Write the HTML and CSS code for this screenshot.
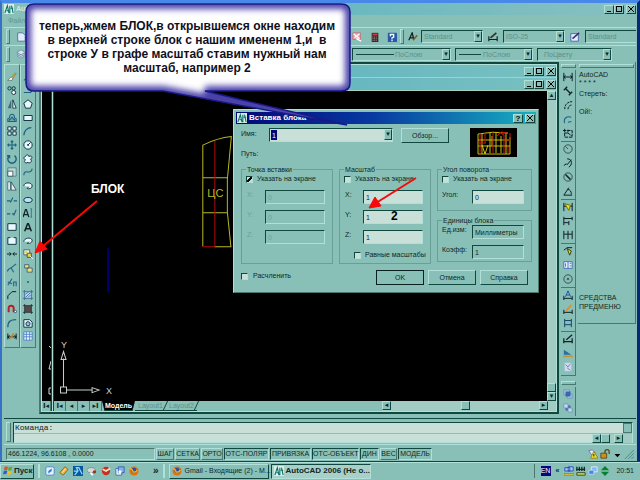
FILE: index.html
```html
<!DOCTYPE html>
<html lang="ru">
<head>
<meta charset="utf-8">
<title>AutoCAD 2006</title>
<link rel="stylesheet" href="styles.css">
</head>
<body>
<div class="desktop">
<main class="app">
  <header class="titlebar">
    <svg class="logo" viewBox="0 0 12 12"><rect width="12" height="12" fill="#d8f0e8"/><path d="M1 11L4 2l2 9M3 8h3M7 2v9M9 2l2 9M8 5h3" stroke="#087068" fill="none" stroke-width="1.3"/></svg>
    <span class="app-name">AutoCAD</span>
    <span class="win-buttons"><button aria-label="Свернуть" class="min"></button><button aria-label="Развернуть" class="max"></button><button aria-label="Закрыть" class="close"></button></span>
  </header>
  <nav class="menu"><a href="#">Файл</a></nav>
  <div class="toolbar standard">
    <div class="tools-left"><i class="grip"></i>
      <svg class="ic" viewBox="0 0 12 12"><path d="M2 1h6l3 3v7H2z" fill="#e0ecf8" stroke="#486898"/></svg></div>
    <svg class="ic" viewBox="0 0 12 12"><path d="M1 1h9v8H1z" fill="#f0a0a8" stroke="#c86878"/><path d="M2 2l7 6M9 2L3 7M5 8l6 3" stroke="#fff" stroke-width="1.5"/></svg>
    <svg class="ic" viewBox="0 0 12 12"><path d="M2 1h8v11H2z" fill="#402828"/><path d="M3 2h6v2H3z" fill="#d04040"/><path d="M3 6h6M3 8h6M3 10h6" stroke="#c0a0a0" stroke-dasharray="1 1"/></svg>
    <svg class="ic help" viewBox="0 0 12 12"><rect x="1" y="1" width="11" height="11" rx="1" fill="#2858a8"/><path d="M4 5V3h4v3L6 7v1M6 9v2" fill="none" stroke="#fff" stroke-width="1.6"/></svg>
    <i class="grip"></i>
    <svg class="ic" viewBox="0 0 12 12"><path d="M1 10L5 1l2 8M2 7h5" fill="none" stroke="#102020" stroke-width="1.5"/><path d="M6 10l5-6" stroke="#806020" stroke-width="2"/></svg>
    <span class="combo"><select aria-label="Текстовый стиль" disabled><option>Standard</option></select></span>
    <svg class="ic" viewBox="0 0 12 12"><path d="M1 5v6M11 5v6M1 9h10" stroke="#102020" stroke-width="1.4"/><path d="M3 7l7-6" stroke="#303020" stroke-width="2"/></svg>
    <span class="combo"><select aria-label="Размерный стиль" disabled><option>ISO-25</option></select></span>
    <svg class="ic" viewBox="0 0 12 12"><path d="M1 2h9v9H1z" fill="#e8f0ff" stroke="#3858b0"/><path d="M3 8l8-7" stroke="#403070" stroke-width="2"/></svg>
    <span class="combo last"><select aria-label="Стиль таблиц" disabled><option>Standard</option></select></span>
  </div>
  <div class="toolbar properties">
    <div class="tools-left"><i class="grip"></i>
      <svg class="ic" viewBox="0 0 12 12"><path d="M1 4l5-3 5 3-5 3zM1 6l5 3 5-3M1 8l5 3 5-3" fill="#d8e8f0" stroke="#6888a0"/></svg></div>
    <span class="combo lined long"><select aria-label="Тип линии" disabled><option>ПоСлою</option></select></span>
    <span class="combo lined"><select aria-label="Вес линии" disabled><option>ПоСлою</option></select></span>
    <span class="combo"><select aria-label="Стиль печати" disabled><option>ПоЦвету</option></select></span>
  </div>

  <div class="workspace">
    <aside class="palette">
      <div class="tool-col">
        <svg viewBox="0 0 12 12"><path d="M4 8l6-7 1 1-5 7z" fill="#e8b840" stroke="#705020" stroke-width=".6"/><path d="M1 10h5l1-2-2-2z" fill="#fff" stroke="#404040" stroke-width=".6"/></svg>
        <svg viewBox="0 0 12 12" class="ln"><circle cx="3" cy="4" r="2"/><circle cx="8" cy="4" r="2"/><circle cx="8" cy="9" r="2.4" fill="#fff"/></svg>
        <svg viewBox="0 0 12 12"><path d="M5 1v10H1z" fill="#406878"/><path d="M7 1v10h4z" fill="#e8f8ff" stroke="#102838"/></svg>
        <svg viewBox="0 0 12 12" class="bl"><path d="M1 10V7l2-1c0-6 6-6 6 0l2 1v3zM3 9V8l2-1c0-3 2-3 2 0l2 1v1"/></svg>
        <svg viewBox="0 0 12 12" class="ln"><path fill="#e8f8ff" d="M1 1h4v4H1zM7 1h4v4H7zM1 7h4v4H1zM7 7h4v4H7z"/></svg>
        <svg viewBox="0 0 12 12" class="bl"><path d="M6 1v10M1 6h10M4.500 2.500L6 1l1.500 1.500M4.500 9.500L6 11l1.500-1.500M2.500 4.500L1 6l1.500 1.500M9.500 4.500L11 6 9.500 7.500"/></svg>
        <svg viewBox="0 0 12 12" class="bl"><path stroke-width="1.7" d="M3 2a5 5 0 1 0 6 0M3 5V2h-3"/></svg>
        <svg viewBox="0 0 12 12"><path fill="#b8d8d8" stroke="#507880" d="M1 1h10v10H1z"/><path fill="#fff" stroke="#305060" d="M1 5h6v6H1z"/></svg>
        <svg viewBox="0 0 12 12"><path d="M1 1h3v10H1z" fill="#fff" stroke="#406070"/><path d="M5 1l6 10H5z" fill="#e8f0f0" stroke="#305060"/></svg>
        <svg viewBox="0 0 12 12" class="bl"><path d="M0 7h4M8 7h4M4 9l3-6"/></svg>
        <svg viewBox="0 0 12 12" class="bl"><path d="M0 7h4M6 7h3M8 9l3-7"/></svg>
        <svg viewBox="0 0 12 12" class="ln"><path fill="#e8f8ff" d="M1 2h10v8H1z"/></svg>
        <svg viewBox="0 0 12 12" class="ln"><path fill="#e8f8ff" d="M4 2H1v8h10V2H8"/></svg>
        <svg viewBox="0 0 12 12" class="dk"><path d="M0 6h5M7 6h5M3 4l2 2-2 2M9 4L7 6l2 2"/></svg>
        <svg viewBox="0 0 12 12" class="bl"><path d="M1 8l5-3 5-4M5 6l3 5M0 10l2-2"/></svg>
        <svg viewBox="0 0 12 12" class="bl"><path d="M1 10l5-8M1 6l5 2M8 11V6h3v5"/></svg>
        <svg viewBox="0 0 12 12" class="dk"><path d="M1 11V7l5-5h5"/></svg>
        <svg viewBox="0 0 12 12"><path d="M2 10V5c0-4 6-4 6 0v5" fill="none" stroke="#b82028" stroke-width="2.400"/><circle cx="10" cy="9" r="1.400" fill="#fff" stroke="#304060"/></svg>
        <svg viewBox="0 0 12 12" class="bl"><path d="M1 11C1 4 4 2 11 2" stroke-width="1.500"/></svg>
        <svg viewBox="0 0 12 12" class="dk"><path d="M1 3v7M11 3v7M1 7h10M3 5L1 7l2 2M9 5l2 2-2 2"/><path d="M4 9l4-6" stroke="#d08020" stroke-width="2"/></svg>
      </div>
      <div class="tool-col">
        <svg viewBox="0 0 12 12" class="bl"><path d="M1 10L11 2"/></svg>
        <svg viewBox="0 0 12 12" class="bl"><path d="M1 9h7c3 0 3-5 0-5"/></svg>
        <svg viewBox="0 0 12 12" class="ln"><path fill="#e8f8ff" d="M6 1l5 4-2 6H3L1 5z"/></svg>
        <svg viewBox="0 0 12 12" class="ln"><path fill="#e8f8ff" d="M1 3h10v6H1z"/></svg>
        <svg viewBox="0 0 12 12" class="bl"><path d="M1 11C1 6 5 2 10 2" stroke-width="1.500"/></svg>
        <svg viewBox="0 0 12 12" class="ln"><circle cx="6" cy="6" r="5" fill="#e8f8ff"/><path d="M6 6l3-3"/><circle cx="6" cy="6" r=".7"/></svg>
        <svg viewBox="0 0 12 12" class="ln"><path fill="#e8f8ff" d="M3 3c1-3 4-2 4 0 4-2 5 2 2 3 3 3-1 6-3 4-3 2-6-1-3-3-3-1-2-4 0-4z"/></svg>
        <svg viewBox="0 0 12 12" class="bl"><path d="M1 10c0-6 4-4 5-4s4 1 5-4"/></svg>
        <svg viewBox="0 0 12 12" class="ln"><path fill="#e8f8ff" d="M1 6c0-5 10-5 10 0 0 3-4 4-6 3L7 7"/></svg>
        <svg viewBox="0 0 12 12" class="ln"><ellipse cx="6" cy="6" rx="5" ry="3" fill="#b8e8f8"/></svg>
        <svg viewBox="0 0 12 12" class="dk"><path d="M0 11L3 2h1l3 9M1 8h5" stroke-width="1.500"/><path d="M10 1v10M9 1h2M9 11h2" stroke="#3878a0"/></svg>
        <svg viewBox="0 0 12 12" class="dk"><path d="M2 11L5.500 2h1L10 11M3.500 8h5" stroke-width="1.800"/></svg>
        <svg viewBox="0 0 12 12" class="ln"><path fill="#e8f8ff" d="M1 7c0-5 9-6 10-2 0 4-4 4-6 4L7 7"/></svg>
        <svg viewBox="0 0 12 12"><path fill="#f8f8e0" stroke="#405868" d="M1 1h7v6H1z"/><path fill="#e8d048" stroke="#504820" d="M5 5h5v5H5z"/><circle cx="4" cy="4" r="1.500" fill="#e8d048"/><path d="M8 8l4 4" stroke="#fff"/></svg>
        <svg viewBox="0 0 12 12"><path fill="#f0e080" stroke="#405868" d="M2 2h5v4H2zM5 6h6v5H5z"/></svg>
        <svg viewBox="0 0 12 12"><rect x="5" y="5" width="2" height="2" fill="#185878"/></svg>
        <svg viewBox="0 0 12 12"><path d="M2 2h8v8H2z" fill="#b8d8f0"/><path d="M0 2h12M0 10h12M2 0v12M10 0v12M3 5l4-3M3 9l6-6M6 9l3-3" stroke="#386898"/></svg>
        <svg viewBox="0 0 12 12"><path d="M2 2h8v8H2z" fill="#584848"/><path d="M0 2h12M0 10h12M2 0v12M10 0v12" stroke="#203038"/></svg>
        <svg viewBox="0 0 12 12" class="ln"><path fill="#e8f8ff" d="M1 2h7l3 3v6H1z"/><circle cx="6" cy="7" r="2.500" fill="#90c8e0"/></svg>
        <svg viewBox="0 0 12 12"><path fill="#e8f8ff" stroke="#4878c8" d="M1 1h10v10H1zM1 4h10M1 7h10M4 1v10M8 1v10"/></svg>
      </div>
    </aside>

    <section class="documents">
      <div class="doc-title"><span class="win-buttons"><button aria-label="Свернуть" class="min"></button><button aria-label="Развернуть" class="max"></button><button aria-label="Закрыть" class="close"></button></span></div>
      <div class="doc-row">
        <div class="doc-back"><div class="back-canvas"><svg viewBox="0 0 9 60"><path d="M9 7L7 5M7 28l2-8M7 28h2M9 47H7v6h2" fill="none" stroke="#d0d8d8"/></svg></div><button class="nav-btn" aria-label="Первый лист">I◂</button></div>
        <div class="doc-front">
          <div class="doc-title"><span class="win-buttons"><button aria-label="Свернуть" class="min"></button><button aria-label="Развернуть" class="max"></button><button aria-label="Закрыть" class="close"></button></span></div>
          <div class="view">
            <div class="canvas">
              <svg viewBox="55 92 492 308" preserveAspectRatio="xMinYMin meet">
                <g fill="none" stroke="#b8b820"><path d="M203.500 247V146Q218 139 232 137.500L228 180v33l3.500 34M203 178.500h25M203 213.500h25M215 247.500h17"/></g>
                <path d="M215.500 142v105.500H203" stroke="#b00808" fill="none"/>
                <text x="208" y="198" class="block-label">ЦС</text>
                <path d="M109 249v44" stroke="#000080" stroke-width="1.500"/>
                <g fill="none" stroke="#c8d0d0"><path d="M61.500 387.500h6v6h-6zM64.500 387v-28M62 360l2.500-8 2.500 8zM67 390.500h26M93 388l7 2.500-7 2.500z"/></g>
                <text x="107" y="394" class="axis">X</text><text x="62" y="348" class="axis">Y</text>
              </svg>
            </div>
            <div class="vscroll"><button aria-label="Вверх">▴</button><i class="thumb"></i><button aria-label="Вниз">▾</button></div>
          </div>
          <div class="sheetbar">
            <button class="nav-btn" aria-label="Первый">I◂</button><button class="nav-btn" aria-label="Назад">◂</button><button class="nav-btn" aria-label="Вперёд">▸</button><button class="nav-btn" aria-label="Последний">▸I</button>
            <button class="tab active">Модель</button><button class="tab">Layout1</button><button class="tab">Layout2</button>
            <div class="hscroll"><button aria-label="Влево">◂</button><i class="thumb"></i><button aria-label="Вправо">▸</button></div>
          </div>
        </div>
      </div>
    </section>

    <aside class="dims">
      <i class="hgrip"></i>
      <div class="dim-set">
        <svg viewBox="0 0 12 12" class="dk"><path d="M1 1v10M11 1v10M1 6h10M3 4L1 6l2 2M9 4l2 2-2 2"/></svg>
        <svg viewBox="0 0 12 12" class="dk"><path d="M1 5l4-4M7 11l4-4M3 3l6 6" stroke-width="1.600"/></svg>
        <svg viewBox="0 0 12 12" class="dk"><path d="M2 11C2 6 5 2 11 2M6 11c0-3 2-5 5-5" stroke-dasharray="3 1"/></svg>
        <svg viewBox="0 0 12 12" class="bl"><path d="M2 11C0 5 5 2 10 4M6 10l4-1"/></svg>
        <svg viewBox="0 0 12 12" class="dk"><path d="M2 1v10h9M2 6h4V2M6 6l5 4V3M0 3h11" stroke-dasharray="4 1"/></svg>
      </div>
      <div class="dim-set">
        <svg viewBox="0 0 12 12" class="dk thin"><circle cx="6" cy="6" r="5"/><path d="M6 6L3 3"/></svg>
        <svg viewBox="0 0 12 12" class="dk"><path d="M5 1c7 0 6 8 2 10M1 9l3-2 1 1 5-6"/></svg>
        <svg viewBox="0 0 12 12" class="dk thin"><circle cx="6" cy="6" r="5"/><path d="M3 3l6 6" stroke-width="1.800"/></svg>
        <svg viewBox="0 0 12 12" class="dk"><path d="M11 11H1l6-9M5 4c4 0 5 3 5 6"/></svg>
      </div>
      <div class="dim-set">
        <svg viewBox="0 0 12 12" class="dk"><path d="M1 1v10M11 1v10M1 5h10"/><path d="M2 2l7 2-2 6z" fill="#f0e020" stroke="#707010"/></svg>
        <svg viewBox="0 0 12 12" class="dk"><path d="M1 1v10M11 1v4M7 6v5M1 3h10M1 8h6"/></svg>
        <svg viewBox="0 0 12 12" class="dk"><path d="M1 1v10M6 1v10M11 1v10M1 5h10"/></svg>
      </div>
      <div class="dim-set">
        <svg viewBox="0 0 12 12" class="dk"><path d="M1 5l4-3h6"/><path d="M5 3l5 3-2 5z" fill="#f0e020" stroke="#404010"/></svg>
        <svg viewBox="0 0 12 12"><path d="M1 2h10v8H1zM6 2v8" fill="#e8f0ff" stroke="#3868b0"/><path d="M3 4v4M8 4h2M8 7h2" stroke="#3868b0"/></svg>
        <svg viewBox="0 0 12 12" class="dk thin"><circle cx="6" cy="6" r="5"/><circle cx="6" cy="6" r="1"/></svg>
      </div>
      <div class="dim-set">
        <svg viewBox="0 0 12 12" class="dk"><path d="M1 7v5M11 7v5M1 10h10"/><path d="M3 8l3-7 3 7M4 6h4" stroke="#2058a0"/></svg>
        <svg viewBox="0 0 12 12" class="dk"><path d="M1 7v5M11 7v5M1 10h10"/><path d="M4 8l6-7" stroke="#e09020" stroke-width="2"/></svg>
        <svg viewBox="0 0 12 12" class="dk"><path d="M2 1v10M10 1v10M2 3h8M2 8h8" stroke="#184868"/></svg>
      </div>
      <div class="dim-set">
        <svg viewBox="0 0 12 12" class="dk"><path d="M1 5v6M11 5v6M1 9h10M4 7l7-6" stroke-width="1.500"/></svg>
        <svg viewBox="0 0 12 12"><path d="M1 8V2l9 6z" fill="#2870a8"/><path d="M0 9h12v2H0z" fill="#c09838"/></svg>
        <svg viewBox="0 0 12 12"><path d="M2 1h8v10H2z" fill="#d0d8f0"/><path d="M3 3l3 3 3-4M5 7l4 3" stroke="#6878a8" fill="none"/></svg>
      </div>
      <i class="hgrip order-grip"></i>
      <div class="dim-set open">
        <svg viewBox="0 0 12 12"><path d="M1 1h7v6H1zM5 6h6v5H5z" fill="#a8c8e8" stroke="#7090b8"/><path d="M3 3h6v6H3z" fill="#3868a8"/></svg>
        <svg viewBox="0 0 12 12"><path d="M3 3h6v6H3z" fill="#3868a8"/><path d="M1 1h5v5H1zM6 6h5v5H6z" fill="#c0d8f0" stroke="#7090b8"/></svg>
      </div>
    </aside>
    <aside class="screen-menu">
      <i class="hgrip"></i>
      <a href="#">AutoCAD</a><a href="#" class="stars">* * * *</a><a href="#" class="erase">Стереть:</a><a href="#">Ой!:</a>
      <div class="menu-end"><a href="#">СРЕДСТВА</a><a href="#">ПРЕДМЕНЮ</a></div>
    </aside>
  </div>

  <section class="command">
    <i class="grip"></i>
    <div class="command-box">
      <div class="history"><label for="cmd">Команда:</label><i class="spin"></i></div>
      <div class="prompt"><input id="cmd" type="text"><div class="hscroll"><button aria-label="Влево">◂</button><i class="thumb"></i><button aria-label="Вправо">▸</button></div></div>
    </div>
  </section>
  <footer class="status">
    <output class="coords">466.1224, 96.6108 , 0.0000</output>
    <button>ШАГ</button><button>СЕТКА</button><button>ОРТО</button><button class="on">ОТС-ПОЛЯР</button><button class="on">ПРИВЯЗКА</button><button class="on">ОТС-ОБЪЕКТ</button><button class="on">ДИН</button><button>ВЕС</button><button class="on">МОДЕЛЬ</button>
    <span class="status-icons">
      <svg viewBox="0 0 12 12"><path d="M1 2l4-1 4 4-4 3z" fill="#e8e8f8" stroke="#7070a0"/><path d="M7 3l5 8H3z" fill="#f8e020" stroke="#907810"/><path d="M7 6v3" stroke="#000"/></svg>
      <svg viewBox="0 0 12 12"><path d="M1 5h7v6H1z" fill="#c89020" stroke="#604008"/><path d="M6 5V3c0-3 5-3 5 0v3" fill="none" stroke="#604008" stroke-width="1.500"/></svg>
      <svg viewBox="0 0 12 12"><path d="M3 6h7l-3.500 4z" fill="#000"/></svg>
      <svg viewBox="0 0 12 12"><path d="M1 12L12 1M5 12l7-7M9 12l3-3" stroke="#488078"/></svg>
    </span>
  </footer>
</main>

<footer class="taskbar">
  <button class="start"><svg viewBox="0 0 12 12"><path d="M2 1q2-1 4 0L5 5Q3 4 1 5z" fill="#e85020"/><path d="M7 1q2 1 4 0l-1 4Q8 6 6 5z" fill="#60a828"/><path d="M1 6q2-1 4 0l-1 4Q2 9 0 10z" fill="#2860d0"/><path d="M6 6q2 1 4 0l-1 4q-2 1-4 0z" fill="#f0c018"/></svg>Пуск</button>
  <i class="bar-sep"></i>
  <nav class="quick">
    <svg viewBox="0 0 12 12"><rect x="1" y="1" width="10" height="10" rx="2" fill="#e0f0ff" stroke="#4080c0"/><path d="M8 3L4 6v3l4-3z" fill="#3878c0"/></svg>
    <svg viewBox="0 0 12 12"><path d="M1 8l6-7 4 3-6 7z" fill="#f0b030" stroke="#886020"/><path d="M4 8l4-5" stroke="#fff"/></svg>
    <svg viewBox="0 0 12 12"><rect width="12" height="12" fill="#0858a0"/><path d="M2 11L6 6 4 2h3l4 8M1 6h4" stroke="#90d8f8" fill="none" stroke-width="1.500"/></svg>
    <svg viewBox="0 0 12 12"><ellipse cx="5" cy="5" rx="5" ry="3" fill="#d8d8d8" stroke="#788"/><circle cx="9" cy="7" r="2" fill="#a03028"/><path d="M4 8l3 3" stroke="#fff" stroke-width="2"/></svg>
    <svg viewBox="0 0 12 12"><circle cx="6" cy="6" r="5" fill="#c83020"/><path d="M2 4l4 2 5-3" stroke="#f8e0d0" stroke-width="2" fill="none"/></svg>
    <svg viewBox="0 0 12 12"><path d="M1 3h7v8H1z" fill="#e8f0ff" stroke="#3868b8"/><path d="M4 1h7v7H4z" fill="#80b0f0" stroke="#3058a8"/><circle cx="6" cy="7" r="2" fill="#fff"/></svg>
    <svg viewBox="0 0 12 12"><circle cx="6" cy="6" r="5.500" fill="#e07010"/><circle cx="6" cy="5" r="3" fill="#2850a0"/><path d="M1 3q3 0 4 4 3 1 5-2" stroke="#f8b828" stroke-width="1.500" fill="none"/></svg>
  </nav>
  <span class="more">»</span>
  <i class="bar-sep"></i>
  <button class="task"><svg viewBox="0 0 12 12"><circle cx="6" cy="6" r="5.500" fill="#e07010"/><circle cx="6" cy="5" r="3" fill="#2850a0"/><path d="M1 3q3 0 4 4 3 1 5-2" stroke="#f8b828" stroke-width="1.500" fill="none"/></svg>Gmail - Входящие (2) - M...</button>
  <button class="task current"><svg viewBox="0 0 12 12"><rect width="12" height="12" fill="#d8f0e8"/><path d="M1 11L4 2l2 9M3 8h3M7 2v9M9 2l2 9M8 5h3" stroke="#087068" fill="none" stroke-width="1.300"/></svg>AutoCAD 2006 (Не о...</button>
  <div class="tray">
    <span class="lang">EN</span><span class="less">«</span>
    <svg viewBox="0 0 12 12"><path d="M1 2h6v4H1zM5 1h6v5H5z" fill="#b0d0f8" stroke="#1840b0"/><path d="M0 9h12v2H0z" fill="#e0d050" stroke="#405020" stroke-width=".5"/></svg>
    <svg viewBox="0 0 12 12"><path d="M1 1v5M4 1v5M7 1v5M10 1v5M1 4h10" stroke="#102820" stroke-width="1.500"/><path d="M1 8h10v3H1z" fill="#d8d850" stroke="#203820"/></svg>
    <svg viewBox="0 0 12 12"><path d="M4 1h7v6H4z" fill="#80b8f8" stroke="#e0f0ff"/><path d="M1 5h6v5H1z" fill="#4888e0" stroke="#c0d8f8"/></svg>
    <svg viewBox="0 0 12 12"><path d="M1 5l5-5 5 5zM1 7l5 5 5-5z" fill="#088030"/></svg>
    <time>20:51</time>
  </div>
</footer>

<form class="dialog" onsubmit="return false">
  <div class="dialog-title"><svg viewBox="0 0 12 12"><rect width="12" height="12" fill="#d8f0e8"/><path d="M1 11L4 2l2 9M3 8h3M7 2v9M9 2l2 9M8 5h3" stroke="#087068" fill="none" stroke-width="1.300"/></svg><span>Вставка блока</span><span class="win-buttons"><button type="button" aria-label="Справка" class="what">?</button><button type="button" aria-label="Закрыть" class="close"></button></span></div>
  <div class="dialog-body">
    <div class="name-row">
      <div class="name-col"><label for="bname">Имя:</label><span class="combo name"><select id="bname"><option>1</option></select></span><button type="button" class="btn">Обзор...</button><span class="path">Путь:</span></div>
      <svg class="preview" viewBox="0 0 47 29"><rect width="47" height="29"/><path d="M8 6Q22 3 38 5M8 12h31M8 18h32M8 26h32M8 6v20M12 6v20M20 5v20M26 5v20M31 8v17M36 5v21M40 9v17M12 17l3 9 3-9M22 8v10" stroke="#c8c010" fill="none"/><path d="M10 5v21M15 5v10M23 5v21M29 4l5 3v5h6V5M34 12v14M8 15h8M38 18v8M27 8l4-4 6 1" stroke="#c81808" fill="none"/></svg>
    </div>
    <div class="groups">
      <fieldset class="insertion"><legend>Точка вставки</legend>
        <label class="check"><input type="checkbox" checked>Указать на экране</label>
        <label class="field off"><span>X:</span><input type="text" value="0" disabled></label>
        <label class="field off"><span>Y:</span><input type="text" value="0" disabled></label>
        <label class="field off"><span>Z:</span><input type="text" value="0" disabled></label>
      </fieldset>
      <fieldset class="scale"><legend>Масштаб</legend>
        <label class="check"><input type="checkbox">Указать на экране</label>
        <label class="field"><span>X:</span><input type="text" value="1"></label>
        <label class="field"><span>Y:</span><input type="text" value="1"></label>
        <label class="field"><span>Z:</span><input type="text" value="1"></label>
        <label class="check uniform"><input type="checkbox">Равные масштабы</label>
      </fieldset>
      <div class="right-groups">
        <fieldset><legend>Угол поворота</legend>
          <label class="check"><input type="checkbox">Указать на экране</label>
          <label class="field"><span>Угол:</span><input type="text" value="0"></label>
        </fieldset>
        <fieldset class="units"><legend>Единицы блока</legend>
          <label class="field"><span>Ед.изм:</span><input type="text" value="Миллиметры" readonly></label>
          <label class="field"><span>Коэфф:</span><input type="text" value="1" readonly></label>
        </fieldset>
      </div>
    </div>
    <div class="dialog-foot"><label class="check"><input type="checkbox">Расчленить</label><button class="btn default">OK</button><button type="button" class="btn">Отмена</button><button type="button" class="btn">Справка</button></div>
  </div>
</form>

<svg class="callout-shape" viewBox="0 0 352 132" aria-hidden="true">
  <defs>
    <filter id="soft" x="-10%" y="-10%" width="120%" height="120%"><feGaussianBlur stdDeviation="3"/></filter>
    <clipPath id="bubble"><path d="M34 4H341Q350 4 350 12V83Q350 91 341 91H205L347 125 163 91H34Q26 91 26 83V12Q26 4 34 4Z"/></clipPath>
  </defs>
  <g clip-path="url(#bubble)"><path d="M0 0H352V132H0Z" fill="#fff"/>
    <path d="M34 4H341Q350 4 350 12V83Q350 91 341 91H205L347 125 163 91H34Q26 91 26 83V12Q26 4 34 4Z" fill="none" stroke="#4840a8" stroke-width="10" filter="url(#soft)"/></g>
  <path d="M34 4H341Q350 4 350 12V83Q350 91 341 91H205L347 125 163 91H34Q26 91 26 83V12Q26 4 34 4Z" fill="none" stroke="#181888" stroke-width="1.500"/>
</svg>
<p class="callout-text">теперь,жмем БЛОК,в открывшемся окне находим<br>в верхней строке блок с нашим имененм 1,и &nbsp;в<br>строке У в графе масштаб ставим нужный нам<br>масштаб, например 2</p>
<strong class="note block-note">БЛОК</strong>
<strong class="note scale-note">2</strong>
<svg class="arrows" viewBox="0 0 640 480" aria-hidden="true"><g stroke="#f80808" stroke-width="2" fill="#f80808"><path d="M97 201L42 247"/><path d="M35 253l5-12 7 8z" stroke-width="1"/><path d="M416 178l-40 25"/><path d="M369 208l6-11 6 9z" stroke-width="1"/></g></svg>
</div>
</body>
</html>
```
FILE: styles.css
```css
:root {
  --face: #88c0b8;
  --light: #b0e0d8;
  --dark: #487870;
  --edge: #104840;
  --field: #c8e0d8;
  --ink: #102824;
}
*, *::before, *::after { box-sizing: border-box; }
body {
  margin: 0;
  font: 7px/10px "Liberation Sans", sans-serif;
  color: var(--ink);
  background: var(--face);
}
button, input, select { font: inherit; color: inherit; margin: 0; padding: 0; border: 0; border-radius: 0; background: none; min-width: 0; }
a { color: inherit; text-decoration: none; }
i { display: block; }
svg { display: block; }
.dk, .ln, .bl { fill: none; stroke: #102028; stroke-width: 1.2; }
.ln { stroke: #183848; }
.bl { stroke: #206080; stroke-width: 1.3; }
.thin { stroke-width: .8; }

.desktop { position: relative; display: flex; flex-direction: column; min-height: 100vh; overflow: hidden; }
.app {
  flex: 1;
  display: flex;
  flex-direction: column;
  border: solid;
  border-width: 3px 3px 0 2px;
  border-color: #4888e8 #082878 #4888e8 #3870c8;
  padding: 0 1px 0 2px;
}
.titlebar { display: flex; align-items: center; height: 12px; gap: 2px; background: linear-gradient(90deg, #88c0b8, #68b8c0 50%, #88c0c0); }
.logo { width: 10px; height: 10px; }
.app-name { font-weight: bold; color: #d0e8e0; }
.win-buttons { display: flex; margin-left: auto; }
.win-buttons button {
  display: grid;
  place-items: center;
  width: 10px;
  height: 9px;
  background: var(--face);
  border: 1px solid;
  border-color: var(--light) var(--edge) var(--edge) var(--light);
  font-weight: bold;
  line-height: 7px;
}
.win-buttons .close { margin-left: 2px; }
.win-buttons .min { place-items: end center; padding-bottom: 1px; }
.min::after { content: ""; width: 4px; height: 1px; background: #000; }
.max::after { content: ""; width: 6px; height: 6px; border: 1px solid #000; }
.close::after { content: ""; width: 6px; height: 6px; background: linear-gradient(45deg, transparent 42%, #000 42% 58%, transparent 58%), linear-gradient(-45deg, transparent 42%, #000 42% 58%, transparent 58%); }
.menu { display: flex; gap: 8px; height: 12px; padding: 1px 4px; color: #609890; }

.toolbar { display: grid; align-items: center; height: 18px; padding-left: 2px; border-top: 1px solid var(--light); }
.standard { grid-template-columns: 342px 16px 18px 14px 5px 14px 62px 18px 62px 18px 1fr; column-gap: 1px; }
.properties { grid-template-columns: 342px 99px 78px 75px; column-gap: 4px; height: 17px; }
.tools-left { display: flex; align-items: center; gap: 6px; }
.grip { width: 4px; height: 15px; border: 1px solid; border-color: var(--light) var(--dark) var(--dark) var(--light); }
.hgrip { height: 4px; margin-bottom: 2px; border: 1px solid; border-color: var(--light) var(--dark) var(--dark) var(--light); }
.ic { width: 10px; height: 10px; justify-self: center; }
.combo { position: relative; display: block; height: 13px; border: 1px solid; border-color: var(--edge) var(--light) var(--light) var(--edge); }
.combo select { display: block; width: 100%; height: 11px; padding-left: 2px; appearance: none; opacity: 1; line-height: 11px; }
.combo select:disabled { color: #5c9088; }
.combo::after {
  content: "▾";
  position: absolute;
  top: 0; right: 0;
  width: 8px; height: 11px;
  border: 1px solid;
  border-color: var(--light) var(--edge) var(--edge) var(--light);
  background: var(--face);
  font: 7px/9px "DejaVu Sans", sans-serif;
  text-align: center;
}
.combo.last::after { display: none; }
.combo.last { border-right: 0; }
.lined::before { content: ""; position: absolute; left: 3px; top: 5px; width: 22px; height: 1px; background: var(--edge); }
.lined.long::before { width: 38px; }
.lined select { padding-left: 27px; }
.lined.long select { padding-left: 42px; }
.properties .combo:last-child select { padding-left: 6px; }

.workspace { flex: 1; display: grid; grid-template-columns: 33px 1fr 15px 58px; column-gap: 2px; }
.palette { display: grid; grid-template-columns: 16px 16px; align-content: start; padding-top: 2px; }
.tool-col { display: grid; grid-template-rows: repeat(20, 1fr); justify-items: center; align-items: center; height: 284px; padding: 5px 0 4px; border: 1px solid; border-color: var(--light) var(--dark) var(--dark) var(--light); }
.tool-col svg { width: 10px; height: 10px; }

.documents { display: flex; flex-direction: column; min-width: 0; margin-bottom: 4px; padding: 1px; border: 2px solid; border-color: var(--edge) var(--edge) var(--edge) var(--dark); background: var(--light); }
.doc-title { display: flex; align-items: center; height: 13px; background: linear-gradient(90deg, #88c0b8, #68b8c0 60%, #78c0c0); border-bottom: 1px solid #a8d0c0; }
.doc-row { flex: 1; display: grid; grid-template-columns: 9px 1fr; }
.doc-back { display: flex; flex-direction: column; background: #000; }
.back-canvas { flex: 1; display: flex; align-items: flex-end; }
.back-canvas svg { width: 9px; height: 60px; }
.doc-front { display: flex; flex-direction: column; min-width: 0; border-left: 3px double var(--edge); background: var(--light); }
.view { flex: 1; display: flex; background: #000; }
.canvas { flex: 1; position: relative; }
.canvas svg { position: absolute; inset: 0; width: 100%; height: 100%; }
.block-label { font: 11px "Liberation Sans", sans-serif; fill: #b8b820; }
.axis { font: 9px "Liberation Sans", sans-serif; fill: #c8d0d0; }
.vscroll { display: flex; flex-direction: column; width: 9px; background: #a0ccc4; }
.vscroll button, .hscroll button, .thumb {
  flex: none;
  width: 9px;
  height: 9px;
  border: 1px solid;
  border-color: var(--light) var(--edge) var(--edge) var(--light);
  background: var(--face);
  font: 7px/7px "DejaVu Sans", sans-serif;
  text-align: center;
}
.vscroll .thumb { margin-top: auto; }
.sheetbar { display: flex; height: 10px; background: var(--face); }
.nav-btn { width: 12px; height: 10px; background: var(--face); border-right: 1px solid var(--dark); font: bold 7px/9px "DejaVu Sans", sans-serif; white-space: nowrap; overflow: hidden; }
.doc-back .nav-btn { width: 9px; }
.tab { position: relative; width: 31px; height: 10px; color: #5c9088; text-align: center; border-bottom: 1px solid var(--edge); }
.tab::after { content: ""; position: absolute; top: 0; right: 0; width: 1px; height: 9px; background: var(--edge); transform: skewX(-25deg); }
.tab.active { width: 33px; background: #000; color: #fff; font-weight: bold; clip-path: polygon(0 0, 100% 0, 92% 100%, 8% 100%); }
.hscroll { display: flex; background: #a0ccc4; }
.sheetbar .hscroll { width: 174px; margin-left: auto; padding-right: 8px; }
.sheetbar .thumb { margin-left: 70px; }
.hscroll button:last-child { margin-left: auto; }

.dims { padding-top: 2px; }
.dim-set { display: grid; justify-items: center; gap: 4px; padding: 2px 0 3px; border-bottom: 1px solid var(--dark); border-right: 1px solid var(--dark); }
.dim-set svg { width: 10px; height: 10px; }
.dim-set.open { border-bottom: 0; }
.order-grip { margin: 5px 0 2px; }
.screen-menu { display: flex; flex-direction: column; height: 262px; padding: 2px 1px 0; border: solid var(--dark); border-width: 0 1px 1px 0; line-height: 9px; }
.stars { line-height: 8px; }
.erase { margin: 2px 0 9px; }
.menu-end { display: grid; margin: auto 0 12px; }

.command { display: flex; gap: 2px; height: 26px; padding: 3px 3px 1px 2px; border-top: 1px solid var(--edge); }
.command .grip { height: 20px; width: 5px; }
.command-box { flex: 1; border: 1px solid; border-color: var(--edge) var(--light) var(--light) var(--edge); background: var(--field); }
.history { display: flex; justify-content: space-between; height: 11px; padding-left: 1px; border-bottom: 1px solid var(--face); font: 8px/10px "Liberation Mono", monospace; }
.spin { width: 9px; height: 10px; background: linear-gradient(var(--face) 45%, var(--edge) 45% 55%, var(--face) 55%); border: 1px solid var(--dark); }
.prompt { display: flex; height: 9px; }
.prompt input { flex: 1; height: 9px; outline: 0; }
.prompt .hscroll { width: 40px; padding-right: 9px; }

.status { display: grid; grid-template-columns: 149px 18px 25px 22px 45px 41px 47px 19px 17px 34px 1fr; column-gap: 1px; height: 17px; padding: 3px 2px 2px; border-top: 1px solid var(--light); }
.status button { height: 12px; border: 1px solid; border-color: var(--light) var(--dark) var(--dark) var(--light); line-height: 10px; white-space: nowrap; text-align: center; }
.status .on { border-color: var(--edge) var(--light) var(--light) var(--edge); }
.coords { display: block; height: 12px; padding-left: 1px; border: 1px solid; border-color: var(--dark) var(--light) var(--light) var(--dark); }
.status-icons { display: flex; justify-content: flex-end; align-items: center; gap: 2px; }
.status-icons svg { width: 10px; height: 10px; }

.taskbar { display: flex; align-items: center; height: 19px; border-top: 1px solid var(--edge); box-shadow: inset 0 1px var(--light); }
.taskbar svg { flex: none; width: 10px; height: 10px; }
.taskbar button { display: flex; align-items: center; gap: 3px; height: 15px; padding: 0 2px; border: 1px solid; border-color: var(--light) var(--edge) var(--edge) var(--light); white-space: nowrap; }
.taskbar .start { gap: 1px; width: 34px; font-weight: bold; font-size: 8px; }
.bar-sep { width: 2px; height: 14px; margin: 0 4px; border: 1px solid; border-color: var(--dark) var(--light); border-width: 0 1px; }
.quick { display: flex; gap: 4px; margin-left: 1px; }
.more { margin-left: 14px; font-weight: bold; font-size: 10px; }
.taskbar .task { width: 100px; margin-right: 2px; }
.taskbar .current { font-weight: bold; font-size: 8px; gap: 2px; background: #a8d0c8; border-color: var(--edge) var(--light) var(--light) var(--edge); }
.tray { display: flex; align-items: center; gap: 2px; margin-left: auto; padding: 0 6px; border-left: 1px solid var(--dark); height: 14px; }
.lang { width: 10px; background: #000880; color: #fff; text-align: center; }
.less { margin: 0 3px; font-weight: bold; }
.tray time { margin-left: 4px; }

.dialog { position: absolute; left: 233px; top: 109px; width: 306px; padding: 2px; background: var(--face); border: 1px solid; border-color: var(--light) var(--dark) var(--dark) var(--light); }
.dialog-title { display: flex; align-items: center; gap: 2px; height: 12px; padding: 0 1px; color: #fff; font-weight: bold; font-size: 8px; background: linear-gradient(90deg, #000878, #0838a0 45%, #18b0c0); }
.dialog-title svg { width: 10px; height: 10px; }
.dialog-title .win-buttons button { color: #000; }
.dialog-body { padding: 4px 3px 5px 5px; }
.name-row { display: flex; justify-content: space-between; height: 37px; padding-right: 16px; }
.name-col { display: grid; grid-template-columns: 20px 124px 48px; column-gap: 8px; align-content: start; row-gap: 5px; line-height: 12px; }
.name { height: 14px; background: var(--field); }
.combo.name select { height: 12px; color: #fff; background: linear-gradient(#000878, #000878) 1px 1px / 6px 10px no-repeat; }
.btn { width: 48px; height: 15px; border: 1px solid; border-color: var(--light) var(--edge) var(--edge) var(--light); text-align: center; }
.preview { width: 47px; height: 29px; }
.groups { display: grid; grid-template-columns: 92px 92px 95px; column-gap: 6px; height: 99px; }
fieldset { min-width: 0; margin: 0; padding: 0 4px; border: 1px solid #68a098; }
legend { padding: 0 1px; line-height: 9px; }
.check { display: flex; align-items: center; gap: 4px; height: 10px; white-space: nowrap; }
input[type="checkbox"] { appearance: none; flex: none; width: 7px; height: 7px; border: 1px solid; border-color: var(--edge) var(--light) var(--light) var(--edge); background: var(--field); }
input[type="checkbox"]:checked { background: var(--field) linear-gradient(-45deg, transparent 40%, #000 40% 65%, transparent 65%); }
.field { display: grid; grid-template-columns: 18px 60px; height: 14px; line-height: 10px; }
.field input { height: 14px; padding: 0 2px; border: 1px solid; border-color: var(--edge) var(--light) var(--light) var(--edge); background: var(--field); outline: 0; }
.insertion .field, .scale .field { margin: 6px 0 0 1px; }
.check + .field { margin-top: 6px; }
.off { color: #68a098; }
.off input { background: var(--face); }
.uniform { margin: 6px 0 0 10px; }
.right-groups { display: grid; grid-template-rows: 46px 46px; gap: 5px; }
.right-groups fieldset { padding-right: 7px; }
.right-groups .field { grid-template-columns: 1fr 52px; margin-bottom: 6px; }
.units .field input { background: var(--face); }
.units .field:last-child { margin-bottom: 0; }
.dialog-foot { display: grid; grid-template-columns: 1fr 48px 48px 48px; column-gap: 4px; padding: 6px 5px 0 0; }
.default { border: 1px solid #082020; }
.dialog-foot .check { gap: 5px; height: 12px; }

.callout-shape { position: absolute; left: 0; top: 0; width: 352px; height: 132px; }
.callout-text { position: absolute; left: 26px; top: 19px; width: 322px; margin: 0; text-align: center; font: bold 12px/14px "Liberation Sans", sans-serif; color: #101020; white-space: nowrap; }
.note { position: absolute; font: bold 12px/14px "Liberation Sans", sans-serif; }
.block-note { left: 91px; top: 182px; color: #fff; }
.scale-note { left: 391px; top: 209px; color: #000; }
.arrows { position: absolute; left: 0; top: 0; width: 640px; height: 480px; pointer-events: none; }
```
